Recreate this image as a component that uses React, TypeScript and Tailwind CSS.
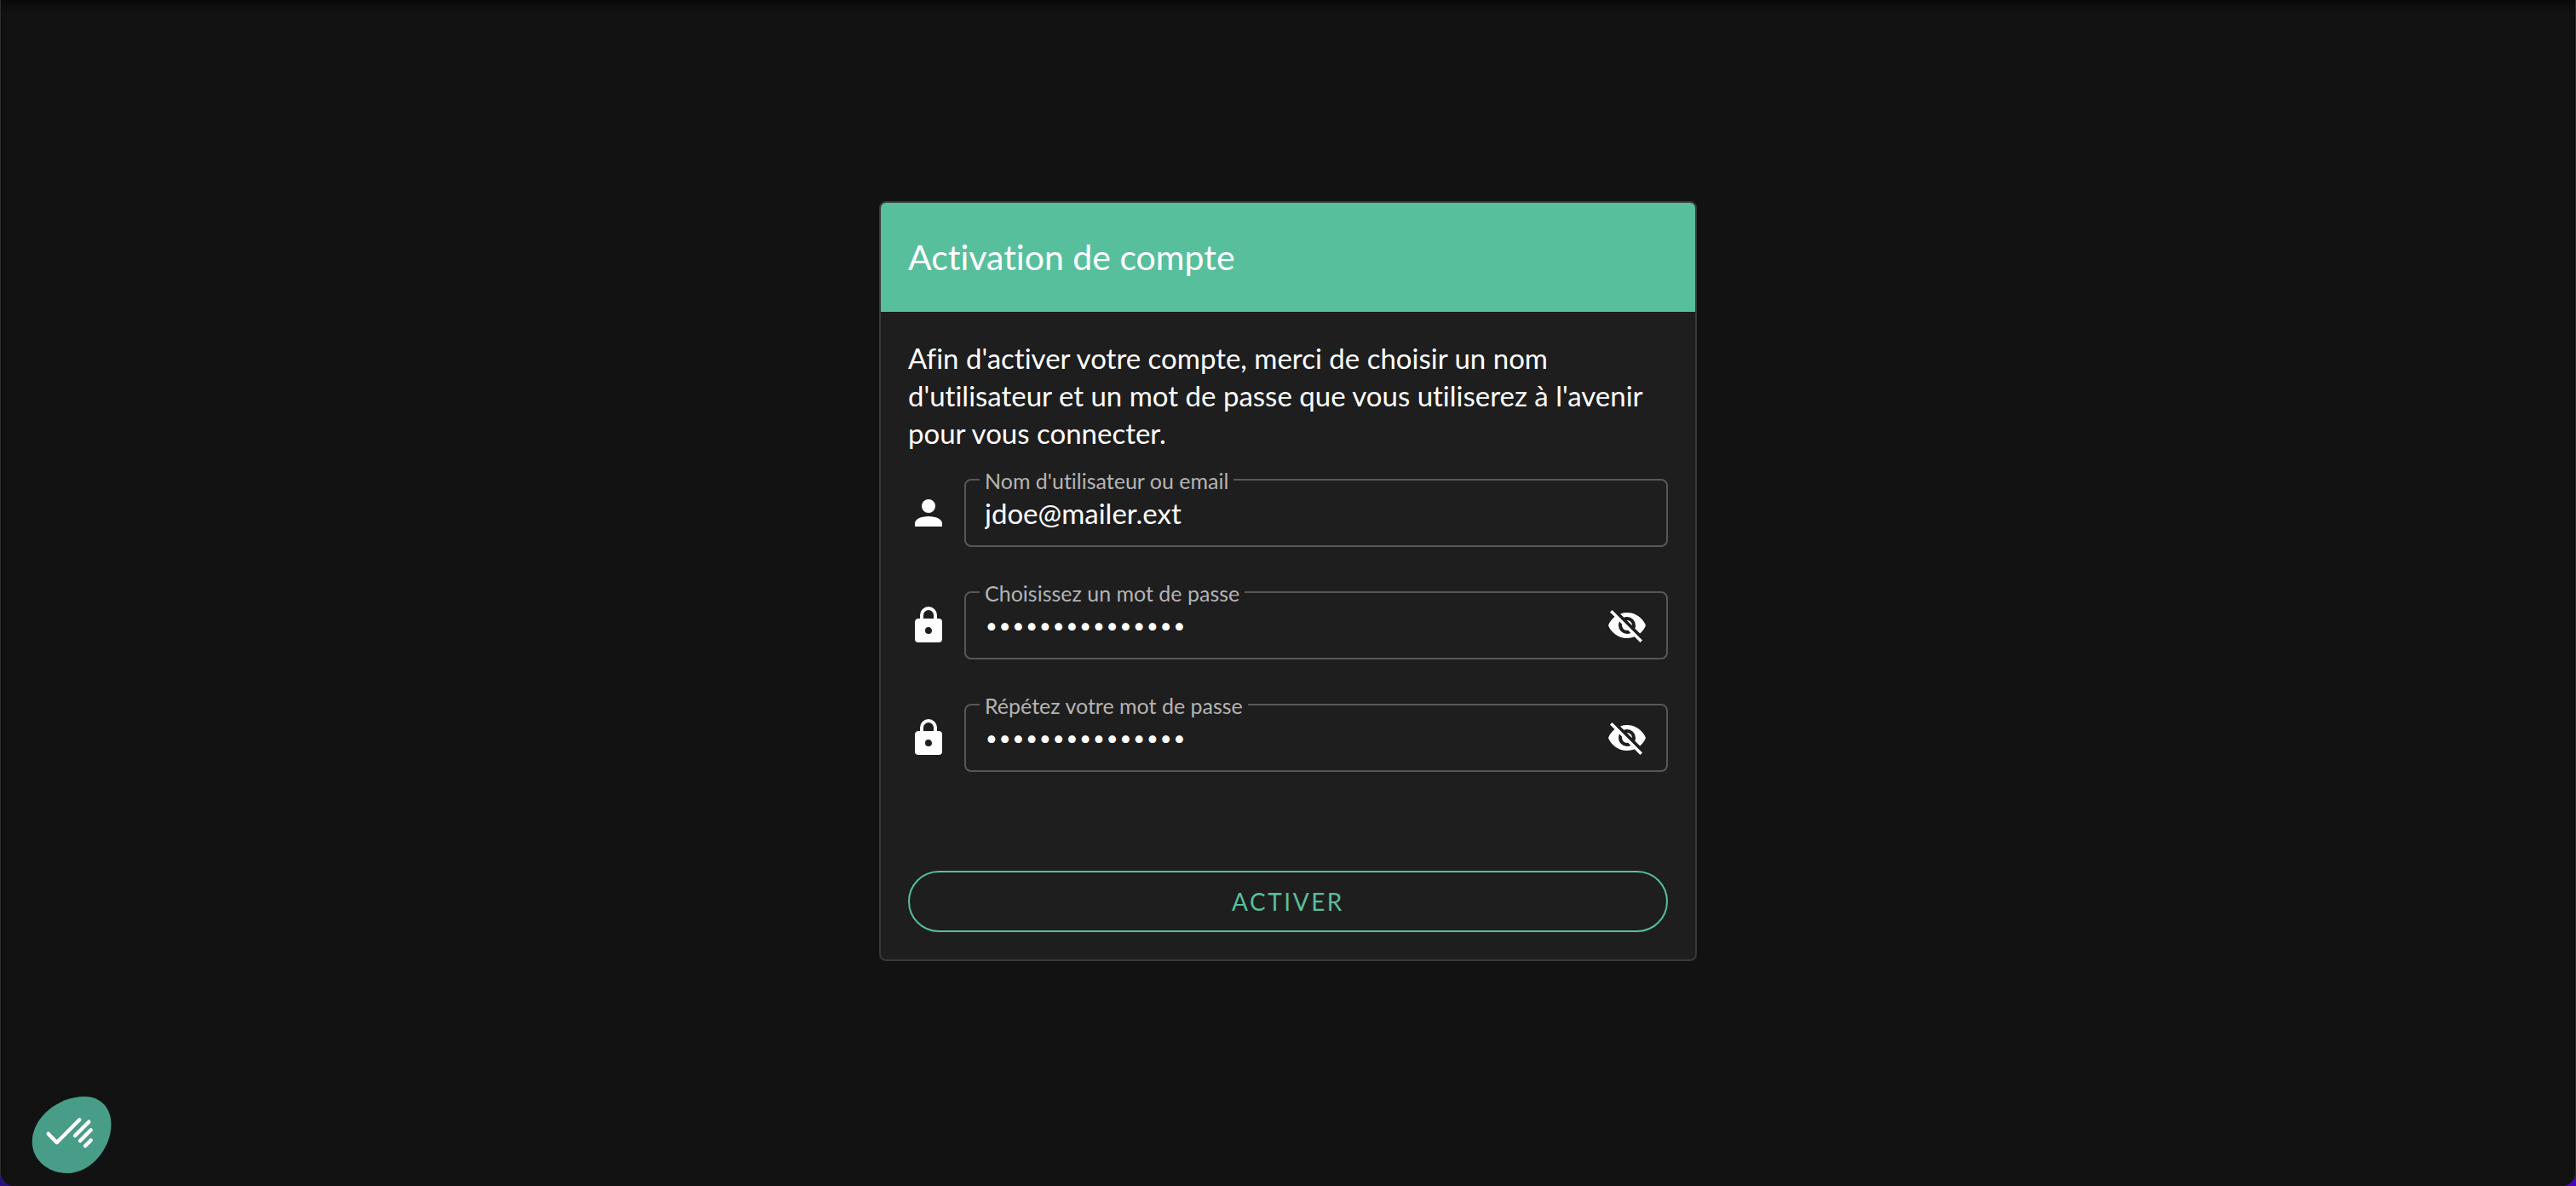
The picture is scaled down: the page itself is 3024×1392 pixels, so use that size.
import { useState, type ReactNode } from 'react';

const ICONS = {
  account:
    'M12,4A4,4 0 0,1 16,8A4,4 0 0,1 12,12A4,4 0 0,1 8,8A4,4 0 0,1 12,4M12,14C16.42,14 20,15.79 20,18V20H4V18C4,15.79 7.58,14 12,14Z',
  lock:
    'M12,17A2,2 0 0,0 14,15C14,13.89 13.1,13 12,13A2,2 0 0,0 10,15A2,2 0 0,0 12,17M18,8A2,2 0 0,1 20,10V20A2,2 0 0,1 18,22H6A2,2 0 0,1 4,20V10C4,8.89 4.9,8 6,8H7V6A5,5 0 0,1 12,1A5,5 0 0,1 17,6V8H18M12,3A3,3 0 0,0 9,6V8H15V6A3,3 0 0,0 12,3Z',
  eyeOff:
    'M11.83,9L15,12.16C15,12.11 15,12.05 15,12A3,3 0 0,0 12,9C11.94,9 11.89,9 11.83,9M7.53,9.8L9.08,11.35C9.03,11.56 9,11.77 9,12A3,3 0 0,0 12,15C12.22,15 12.44,14.97 12.65,14.92L14.2,16.45C13.53,16.78 12.79,17 12,17A5,5 0 0,1 7,12C7,11.21 7.2,10.47 7.53,9.8M2,4.27L4.28,6.55L4.73,7C3.08,8.3 1.78,10 1,12C2.73,16.39 7,19.5 12,19.5C13.55,19.5 15.03,19.2 16.38,18.66L16.81,19.08L19.73,22L21,20.73L3.27,3M12,7A5,5 0 0,1 17,12C17,12.64 16.87,13.26 16.64,13.82L19.57,16.75C21.07,15.5 22.27,13.86 23,12C21.27,7.61 17,4.5 12,4.5C10.6,4.5 9.26,4.75 8,5.2L10.17,7.35C10.74,7.13 11.35,7 12,7Z',
  eye:
    'M12,9A3,3 0 0,0 9,12A3,3 0 0,0 12,15A3,3 0 0,0 15,12A3,3 0 0,0 12,9M12,17A5,5 0 0,1 7,12A5,5 0 0,1 12,7A5,5 0 0,1 17,12A5,5 0 0,1 12,17M12,4.5C7,4.5 2.73,7.61 1,12C2.73,16.39 7,19.5 12,19.5C17,19.5 21.27,16.39 23,12C21.27,7.61 17,4.5 12,4.5Z',
};

function Icon({ name }: { name: keyof typeof ICONS }) {
  return (
    <svg viewBox="0 0 24 24" className="size-12 shrink-0 fill-current" aria-hidden="true">
      <path d={ICONS[name]} />
    </svg>
  );
}

type FieldProps = {
  id: string;
  label: string;
  icon: keyof typeof ICONS;
  children: ReactNode;
};

function Field({ id, label, icon, children }: FieldProps) {
  return (
    <div className="flex items-center gap-[18px]">
      <Icon name={icon} />
      <div className="relative flex h-20 min-w-0 flex-1 items-center rounded-lg border-2 border-[#575757] px-[22px]">
        <label
          htmlFor={id}
          className="absolute -top-[15px] left-4 bg-[#1e1e1e] px-[6px] text-[25px] leading-[30px] text-[#b4b4b4]"
        >
          {label}
        </label>
        {children}
      </div>
    </div>
  );
}

function PasswordField({ id, label }: { id: string; label: string }) {
  const [value, setValue] = useState('motdepasse12345');
  const [visible, setVisible] = useState(false);
  return (
    <Field id={id} label={label} icon="lock">
      <input
        id={id}
        type={visible ? 'text' : 'password'}
        value={value}
        onChange={(e) => setValue(e.target.value)}
        className="h-full min-w-0 flex-1 bg-transparent font-['Inter',sans-serif] text-[28px] outline-none"
      />
      <button
        type="button"
        aria-label={visible ? 'Masquer le mot de passe' : 'Afficher le mot de passe'}
        onClick={() => setVisible(!visible)}
      >
        <Icon name={visible ? 'eye' : 'eyeOff'} />
      </button>
    </Field>
  );
}

export default function App() {
  const [user, setUser] = useState('jdoe@mailer.ext');
  return (
    <div className="bg-linear-to-r from-[#2a1080] to-[#4a00c8] font-['Lato',sans-serif] [font-variant-ligatures:none]">
      <main className="flex min-h-screen items-center justify-center rounded-b-2xl border-x border-[#2e2e2e] bg-[#121212] pb-7 text-white shadow-[inset_0_12px_12px_-8px_#070707]">
        <form
          className="w-full max-w-[960px] overflow-hidden rounded-lg border-2 border-[#393939] bg-[#1e1e1e]"
          onSubmit={(e) => e.preventDefault()}
        >
          <h1 className="bg-[#58bf9c] p-8 text-[41px] leading-[64px]">Activation de compte</h1>
          <div className="flex flex-col p-8">
            <p className="text-[33px] leading-[44px]">
              Afin d'activer votre compte, merci de choisir un nom d'utilisateur et un mot de passe que vous
              utiliserez à l'avenir pour vous connecter.
            </p>
            <div className="mt-8 flex flex-col gap-[52px]">
              <Field id="user" label="Nom d'utilisateur ou email" icon="account">
                <input
                  id="user"
                  type="text"
                  value={user}
                  onChange={(e) => setUser(e.target.value)}
                  className="h-full min-w-0 flex-1 bg-transparent text-[33px] outline-none"
                />
              </Field>
              <PasswordField id="password" label="Choisissez un mot de passe" />
              <PasswordField id="confirm" label="Répétez votre mot de passe" />
            </div>
            <button
              type="submit"
              className="mt-[116px] h-[72px] rounded-full border-2 border-[#58bf9c] text-[28px] tracking-[0.09em] text-[#58bf9c] uppercase"
            >
              Activer
            </button>
          </div>
        </form>
      </main>
      <button type="button" aria-label="Gérer les cookies" className="fixed bottom-[15px] left-[37px]">
        <svg viewBox="0 0 94 90" className="h-[90px] w-[94px]" aria-hidden="true">
          <path
            fill="#489d88"
            d="M62 0C81 0 93.500 13 93.500 33C93.500 59 71 90 42 90C19 90 .7 74 .7 53C.7 25 31 0 62 0Z"
          />
          <path
            d="M19.700 43.700L29.700 54L56.300 27.300M51 46L67.300 29.700M57 52L69.700 39.300M63 58L69.700 51.300"
            fill="none"
            stroke="#fff"
            strokeWidth="4.400"
            strokeLinecap="round"
            strokeLinejoin="round"
          />
        </svg>
      </button>
    </div>
  );
}
